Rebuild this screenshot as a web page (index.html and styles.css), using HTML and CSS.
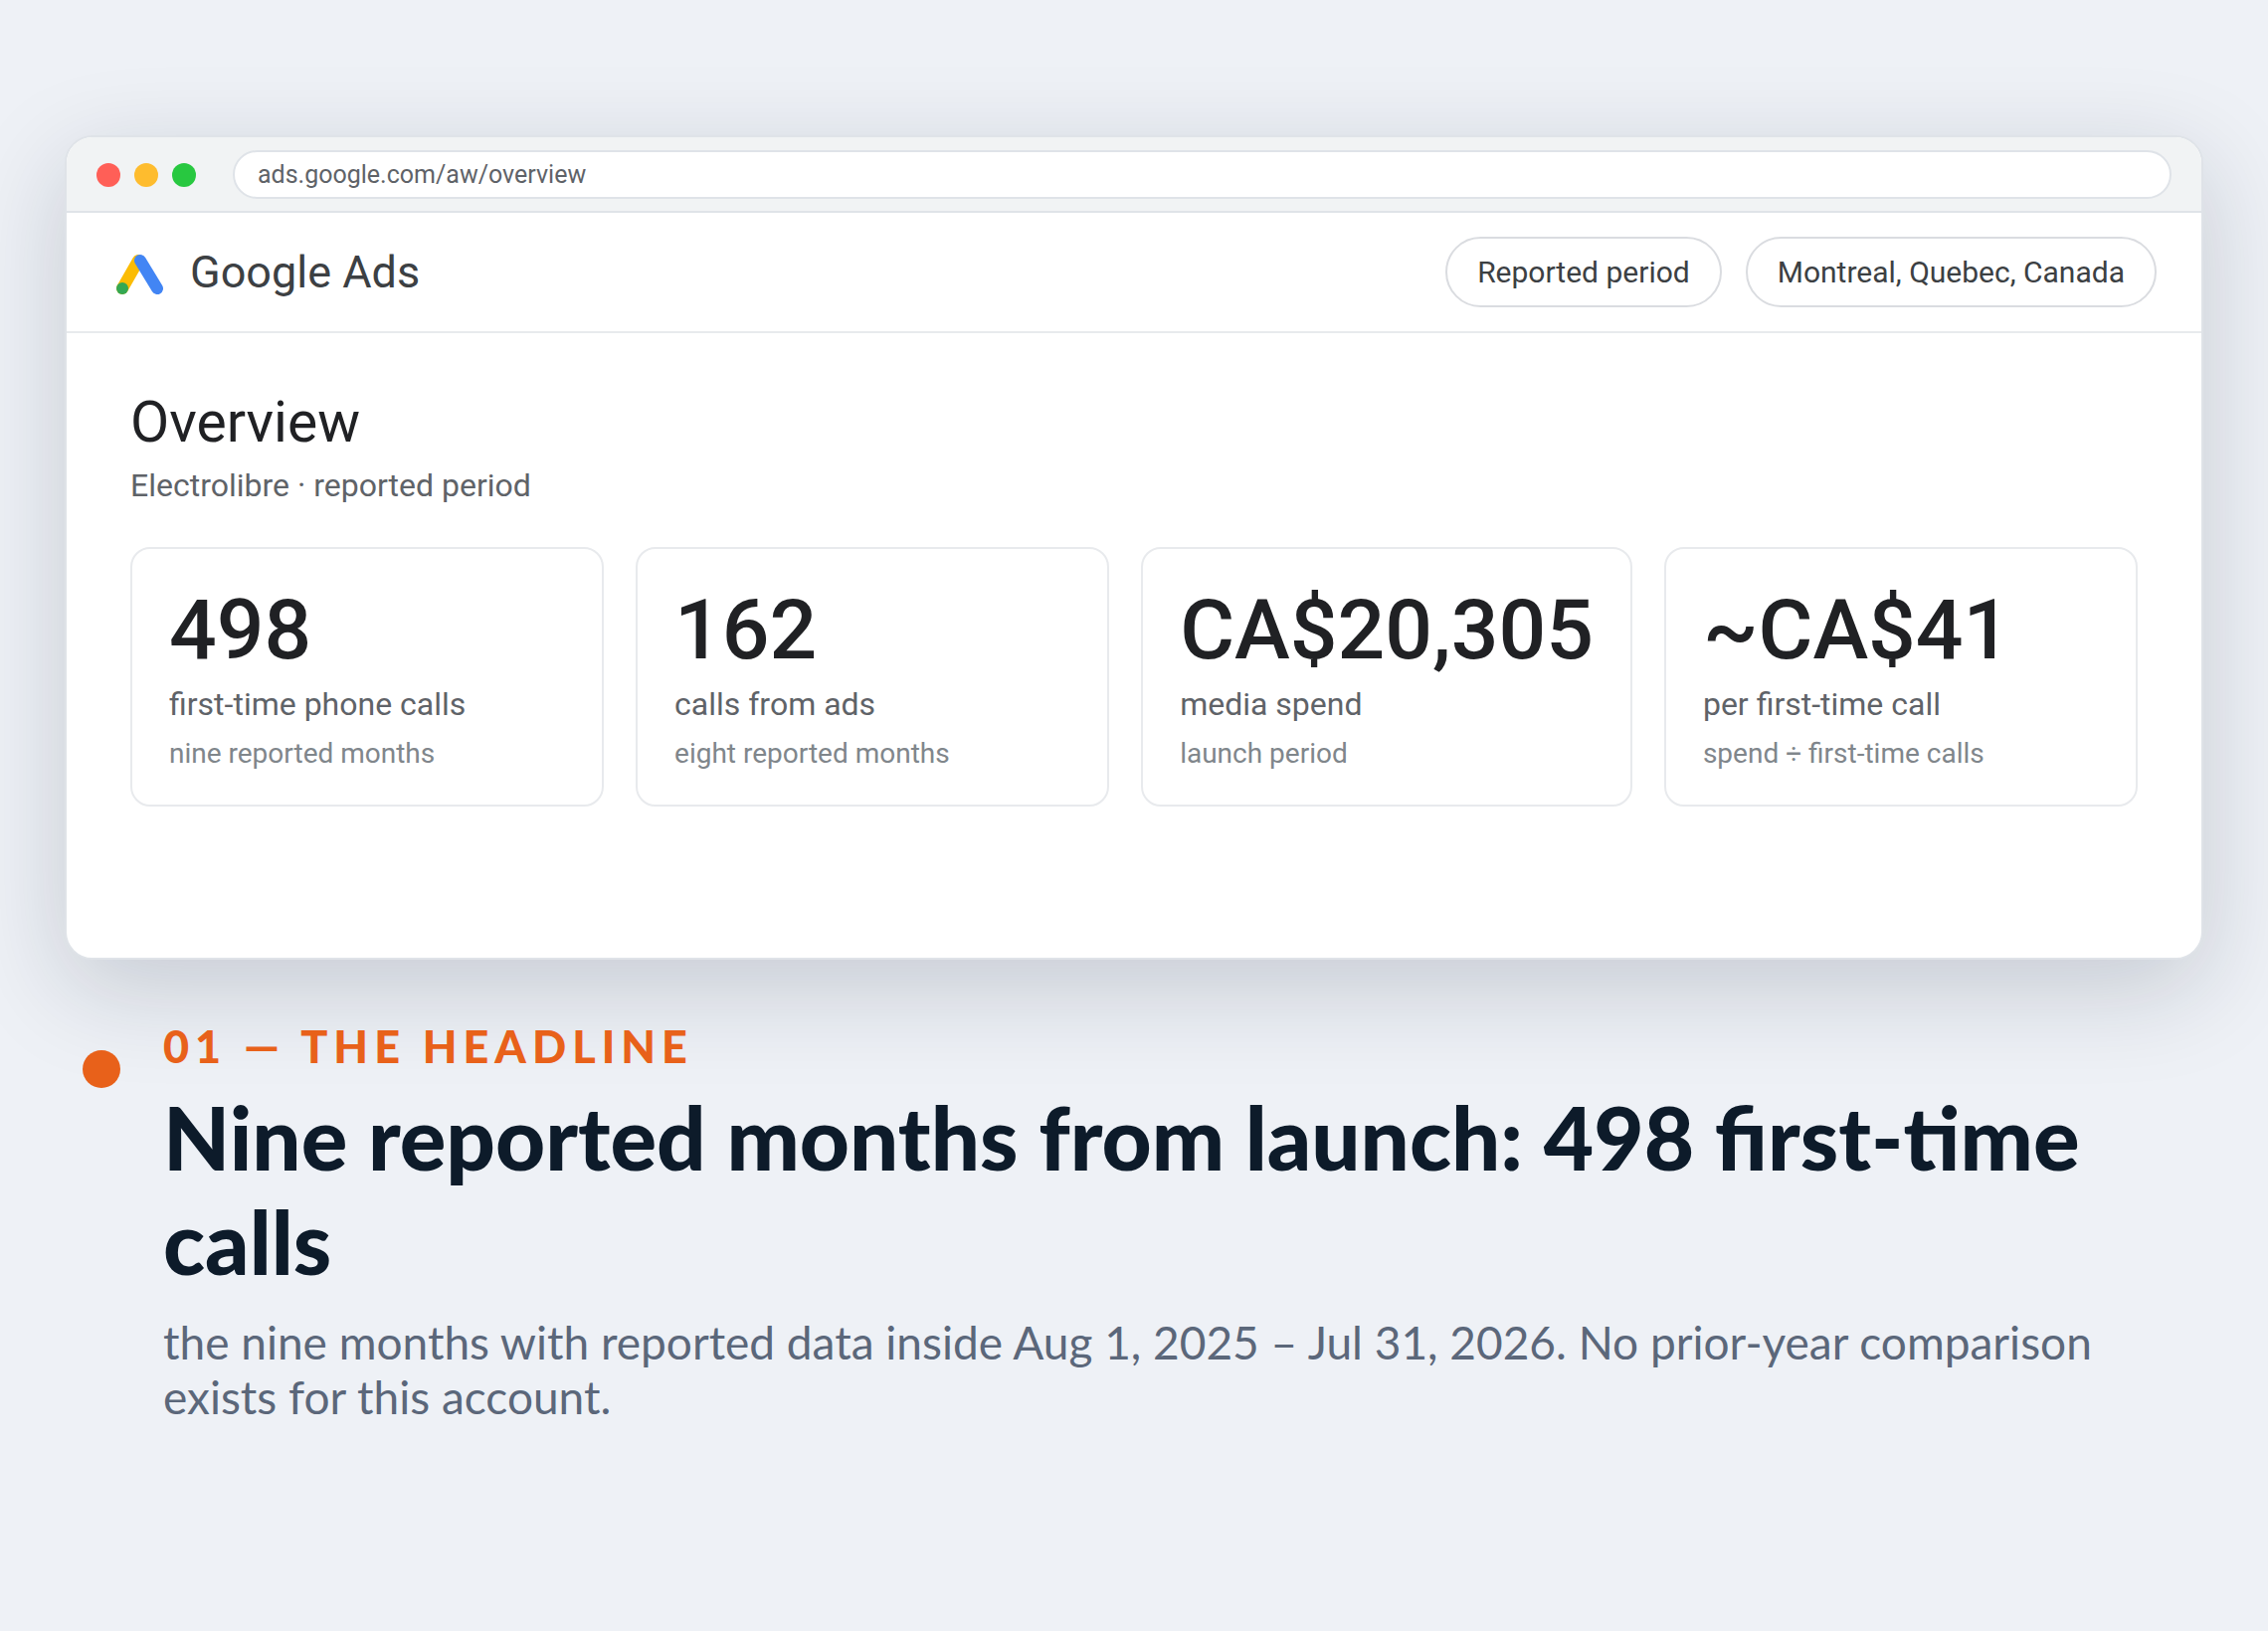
FILE: index.html
```html
<!DOCTYPE html>
<html lang="en">
<head>
    <meta charset="UTF-8">
    <meta name="viewport" content="width=device-width, initial-scale=1.0">
    <title>Google Ads Overview</title>
    <link rel="stylesheet" href="styles.css">
</head>
<body>
    <main class="browser">
        <div class="browser-bar">
            <div class="dots">
                <span class="dot red"></span>
                <span class="dot yellow"></span>
                <span class="dot green"></span>
            </div>
            <div class="url">ads.google.com/aw/overview</div>
        </div>
        <header class="app-header">
            <svg class="logo" viewBox="0 0 56 56" aria-hidden="true">
                <path d="M11 44 27 16" stroke="#fbbc04" stroke-width="12" stroke-linecap="round"/>
                <path d="M29 16 46 44" stroke="#4285f4" stroke-width="12" stroke-linecap="round"/>
                <circle cx="11" cy="44" r="6" fill="#34a853"/>
            </svg>
            <span class="app-name">Google Ads</span>
            <div class="chips">
                <button type="button" class="chip">Reported period</button>
                <button type="button" class="chip">Montreal, Quebec, Canada</button>
            </div>
        </header>
        <section class="overview">
            <h1>Overview</h1>
            <p class="account">Electrolibre · reported period</p>
            <div class="cards">
                <div class="card">
                    <div class="value">498</div>
                    <div class="label">first-time phone calls</div>
                    <div class="note">nine reported months</div>
                </div>
                <div class="card">
                    <div class="value">162</div>
                    <div class="label">calls from ads</div>
                    <div class="note">eight reported months</div>
                </div>
                <div class="card">
                    <div class="value">CA$20,305</div>
                    <div class="label">media spend</div>
                    <div class="note">launch period</div>
                </div>
                <div class="card">
                    <div class="value">~CA$41</div>
                    <div class="label">per first-time call</div>
                    <div class="note">spend ÷ first-time calls</div>
                </div>
            </div>
        </section>
    </main>
    <section class="caption">
        <span class="marker"></span>
        <div class="caption-text">
            <p class="eyebrow">01 — THE HEADLINE</p>
            <h2>Nine reported months from launch: 498 first-time calls</h2>
            <p class="detail">the nine months with reported data inside Aug 1, 2025 – Jul 31, 2026. No prior-year comparison exists for this account.</p>
        </div>
    </section>
</body>
</html>
```
FILE: styles.css
```css
* {
    box-sizing: border-box;
}
body {
    margin: 0;
    padding: 136px 65px;
    background: #eef1f6;
    color: #202124;
    font-family: Roboto, sans-serif;
}
h1, h2, p {
    margin: 0;
}
.browser {
    background: #fff;
    border: 2px solid #dfe3e8;
    border-radius: 28px;
    box-shadow: 0 28px 100px rgba(15, 28, 52, 0.18);
    overflow: hidden;
}
.browser-bar {
    display: flex;
    align-items: center;
    gap: 37px;
    padding: 13px 30px 12px;
    background: #f1f3f4;
    border-bottom: 2px solid #dfe3e8;
}
.dots {
    display: flex;
    gap: 14px;
}
.dot {
    width: 24px;
    height: 24px;
    border-radius: 50%;
}
.red {
    background: #ff5f57;
}
.yellow {
    background: #febc2e;
}
.green {
    background: #28c840;
}
.url {
    flex: 1;
    padding: 8px 23px 7px;
    background: #fff;
    border: 2px solid #dfe3e8;
    border-radius: 25px;
    color: #5f6368;
    font-size: 25px;
    line-height: 30px;
}
.app-header {
    display: flex;
    align-items: center;
    gap: 23px;
    padding: 24px 45px;
    border-bottom: 2px solid #e8eaed;
}
.logo {
    width: 56px;
    height: 56px;
    fill: none;
}
.app-name {
    color: #3c4043;
    font-size: 45px;
}
.chips {
    display: flex;
    gap: 24px;
    margin-left: auto;
}
.chip {
    padding: 16px 30px;
    background: #fff;
    border: 2px solid #dadce0;
    border-radius: 36px;
    color: #3c4043;
    font-family: inherit;
    font-size: 30px;
    line-height: 35px;
}
.overview {
    padding: 57px 64px 152px;
}
h1 {
    font-size: 57px;
    font-weight: 400;
    line-height: 66px;
}
.account {
    margin-top: 11px;
    color: #5f6368;
    font-size: 32px;
    line-height: 38px;
}
.cards {
    display: grid;
    grid-template-columns: repeat(4, 1fr);
    gap: 32px;
    margin-top: 43px;
}
.card {
    padding: 36px 37px 34px;
    border: 2px solid #e8eaed;
    border-radius: 20px;
}
.value {
    font-size: 84px;
    font-weight: 500;
    line-height: 92px;
}
.label {
    margin-top: 9px;
    color: #5f6368;
    font-size: 32px;
    line-height: 38px;
}
.note {
    margin-top: 14px;
    color: #80868b;
    font-size: 28px;
    line-height: 34px;
}
.caption {
    display: flex;
    align-items: flex-start;
    gap: 43px;
    padding: 59px 18px 0;
    color: #0d1b2a;
    font-family: Lato, sans-serif;
}
.marker {
    flex: none;
    width: 38px;
    height: 38px;
    margin-top: 32px;
    border-radius: 50%;
    background: #e8611a;
}
.eyebrow {
    color: #e8611a;
    font-size: 45px;
    font-weight: 900;
    letter-spacing: 6px;
    line-height: 56px;
}
h2 {
    margin-top: 11px;
    font-size: 87px;
    font-weight: 900;
    line-height: 105px;
}
.detail {
    margin-top: 21px;
    color: #5b677a;
    font-size: 46px;
    line-height: 55px;
}
```
